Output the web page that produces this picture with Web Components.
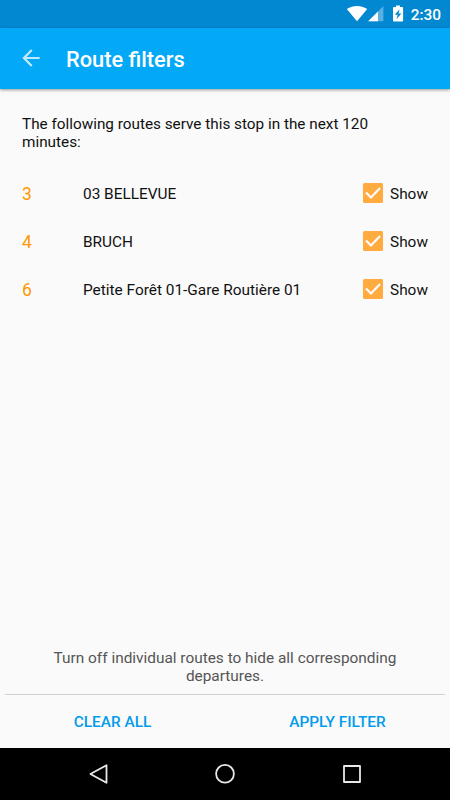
<!DOCTYPE html>
<html lang="en">
<head>
<meta charset="utf-8">
<title>Route filters</title>
<style>
    html, body {
        margin: 0;
        height: 100%;
    }

    body {
        font-family: Roboto, sans-serif;
        font-size: 15.4px;
        line-height: 18px;
        color: #111;
        background: #fafafa;
        overflow: hidden;
    }
</style>
</head>
<body>
<!--
    Android status bar
-->
<template id="status-bar-template">
    <style>
        :host {
            display: flex;
            align-items: center;
            justify-content: flex-end;
            flex: none;
            box-sizing: border-box;
            height: 28px;
            padding-right: 9px;
            background: #0288d1;
            color: #fff;
            font-size: 15.4px;
            font-weight: 500;
        }

        svg {
            display: block;
            flex: none;
        }

        .time {
            margin: 1px 0 0 7px;
        }
    </style>
    <svg width="58" height="28" viewBox="346 0 58 28" fill="#fff">
        <path d="M357 21.3 346.8 9C353 4.9 361 4.9 367.2 9z"/>
        <path d="M383.4 6v15.2H368.2z" opacity=".35"/>
        <path d="M378 11.4v9.8h-9.8z"/>
        <path fill-rule="evenodd" d="M396 5.4h4v1.7h2.2c.5 0 .9.4.9.9v12.6c0 .5-.4.9-.9.9h-8.3c-.5 0-.9-.4-.9-.9V8c0-.5.4-.9.9-.9h2.1zM399.6 9.2 394.8 14.8h2.9l-1.2 4.5 4.9-5.9h-2.8z"/>
    </svg>
    <span class="time"><slot></slot></span>
</template>

<!--
    Toolbar with the back arrow, title in the default slot
-->
<template id="tool-bar-template">
    <style>
        :host {
            display: flex;
            align-items: center;
            flex: none;
            box-sizing: border-box;
            height: 61px;
            padding-left: 17.5px;
            background: #03a9f6;
            color: #fff;
            box-shadow: 0 1px 3px rgba(0, 0, 0, .4);
            z-index: 1;
        }

        svg {
            display: block;
            margin: 0 22.5px 1px 0;
        }

        h1 {
            margin: 2px 0 0;
            font-size: 21.8px;
            line-height: 26px;
            font-weight: 500;
        }
    </style>
    <svg width="26" height="26" viewBox="0 0 24 24" fill="#fff" fill-opacity=".75">
        <path d="M20 11H7.83l5.59-5.59L12 4l-8 8 8 8 1.41-1.41L7.83 13H20v-2z"/>
    </svg>
    <h1><slot></slot></h1>
</template>

<!--
    One route: number, destination and the "Show" checkbox
-->
<template id="route-row-template">
    <style>
        :host {
            display: flex;
            align-items: center;
            height: 48px;
        }

        .number {
            width: 61px;
            color: #ff9800;
            font-size: 17.5px;
        }

        .name {
            flex: 1;
        }

        svg {
            display: block;
            margin: 0 4.5px 2px 0;
        }

        .check {
            width: 38px;
        }
    </style>
    <span class="number"><slot name="number"></slot></span>
    <span class="name"><slot></slot></span>
    <svg width="26" height="26" viewBox="0 0 26 26">
        <rect x="3" y="3" width="20" height="20" rx="1.6" fill="#ffab40"/>
        <path d="M6 12.5l5 5L20 8" fill="none" stroke="#fafafa" stroke-width="2.2"/>
    </svg>
    <span class="check">Show</span>
</template>

<!--
    Hint and dialog buttons at the bottom of the page
-->
<template id="filter-footer-template">
    <style>
        :host {
            display: block;
            flex: none;
        }

        .hint {
            padding: 0 50px 9px;
            text-align: center;
            color: #555;
        }

        hr {
            margin: 0 5px;
            border: 0;
            border-top: 1px solid #d0d0d0;
        }

        .buttons {
            display: grid;
            grid-template-columns: 1fr 1fr;
            align-items: center;
            height: 53px;
            text-align: center;
            font-weight: 500;
            color: #039bec;
        }
    </style>
    <div class="hint"><slot></slot></div>
    <hr>
    <div class="buttons">
        <slot name="clear"></slot>
        <slot name="apply"></slot>
    </div>
</template>

<!--
    Android navigation bar
-->
<template id="nav-bar-template">
    <style>
        :host {
            display: block;
            flex: none;
            height: 52px;
            background: #000;
        }

        svg {
            display: block;
        }
    </style>
    <svg width="450" height="52" viewBox="0 748 450 52" fill="none" stroke="#e8e8e8" stroke-width="1.8" stroke-linejoin="round">
        <path d="M106.5 765.2v17.6L90.4 774z"/>
        <circle cx="225" cy="773.8" r="8.9"/>
        <rect x="344" y="766" width="16" height="16"/>
    </svg>
</template>

<template id="filter-page-template">
    <style>
        :host {
            display: flex;
            flex-direction: column;
            height: 800px;
            width: 450px;
        }

        .content {
            flex: 1;
            padding: 26px 22px 0;
        }

        .intro {
            margin: 0 0 19px;
            padding-right: 30px;
            font-size: 15.3px;
        }
    </style>
    <status-bar>2:30</status-bar>
    <tool-bar>Route filters</tool-bar>
    <div class="content">
        <p class="intro">The following routes serve this stop in the next 120 minutes:</p>
        <slot></slot>
    </div>
    <filter-footer>
        Turn off individual routes to hide all corresponding departures.
        <span slot="clear">CLEAR ALL</span>
        <span slot="apply">APPLY FILTER</span>
    </filter-footer>
    <nav-bar></nav-bar>
</template>

<filter-page>
    <route-row><span slot="number">3</span>03 BELLEVUE</route-row>
    <route-row><span slot="number">4</span>BRUCH</route-row>
    <route-row><span slot="number">6</span>Petite Forêt 01-Gare Routière 01</route-row>
</filter-page>

<script>
    // Base class, clones the template named after the element
    class TemplateElement extends HTMLElement {
        constructor() {
            super();
            const template = document.getElementById(this.localName + '-template');
            this.attachShadow({mode: 'open'});
            this.shadowRoot.appendChild(template.content.cloneNode(true));
        }
    }

    ['status-bar', 'tool-bar', 'route-row', 'filter-footer', 'nav-bar', 'filter-page'].forEach(name => {
        window.customElements.define(name, class extends TemplateElement {});
    });
</script>
</body>
</html>
